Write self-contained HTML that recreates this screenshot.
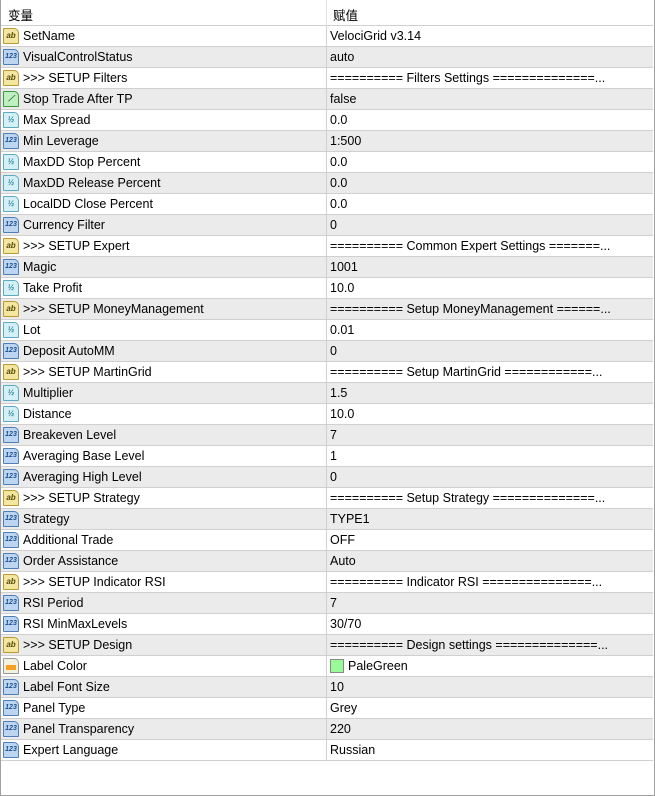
<!DOCTYPE html>
<html><head><meta charset="utf-8"><style>
*{margin:0;padding:0;box-sizing:border-box}
body{width:655px;height:796px;background:#fff;font-family:"Liberation Sans","Noto Sans CJK SC",sans-serif;font-size:12.5px;color:#000;position:relative;overflow:hidden}
.frame{position:absolute;left:0;top:0;width:655px;height:796px;border:1px solid #a0a0a0;border-top:none}
.hdr{position:absolute;left:1px;top:0;width:652px;height:26px;border-bottom:1px solid #d0d0d0}
.hdr span{position:absolute;top:5px;font-family:"Noto Sans CJK SC",sans-serif;font-size:12.5px}
.row{position:absolute;left:1px;width:652px;height:21px;border-bottom:1px solid #d0d0d0}
.row.g{background:#ebebeb}
.row .n{position:absolute;left:22px;top:3px;white-space:nowrap}
.row .v{position:absolute;left:329px;top:3px;white-space:nowrap;width:318px;overflow:hidden}
.row:before{content:"";position:absolute;left:325px;top:0;width:1px;height:21px;background:#d0d0d0}
.hdr:before{content:"";position:absolute;left:325px;top:0;width:1px;height:26px;background:#e0e0e0}
.ic{position:absolute;left:2px;top:2px;width:16px;height:16px;border:1px solid;border-radius:1px 5px 1px 1px;font-size:8px;line-height:14px;text-align:center;font-weight:bold}
.s{background:#f3e6a0;border-color:#b89a30;color:#5a4a00}
.i{background:#bcd6f2;border-color:#4f7fb8;color:#1d4f8f;font-size:7px}
.d{background:#d4f0f6;border-color:#5aaac0;color:#2a7f98}
.b{background:#bfeec0;border-color:#3a9a3a;color:#1a6a1a}
.c{background:#f5f0e0;border-color:#999;}
.c:after{content:"";position:absolute;left:2px;top:6px;width:10px;height:5px;background:#f5a020}
.sw{display:inline-block;width:14px;height:14px;background:#98fb98;border:1px solid #888;vertical-align:-3px;margin-right:4px}
</style></head><body>
<div class="frame"></div>
<div class="hdr"><span style="left:7px">变量</span><span style="left:332px">赋值</span></div>
<div class="row" style="top:26px"><i class="ic s">ab</i><span class="n">SetName</span><span class="v">VelociGrid v3.14</span></div>
<div class="row g" style="top:47px"><i class="ic i">123</i><span class="n">VisualControlStatus</span><span class="v">auto</span></div>
<div class="row" style="top:68px"><i class="ic s">ab</i><span class="n">&gt;&gt;&gt; SETUP Filters</span><span class="v">========== Filters Settings ==============...</span></div>
<div class="row g" style="top:89px"><i class="ic b">⟋</i><span class="n">Stop Trade After TP</span><span class="v">false</span></div>
<div class="row" style="top:110px"><i class="ic d">½</i><span class="n">Max Spread</span><span class="v">0.0</span></div>
<div class="row g" style="top:131px"><i class="ic i">123</i><span class="n">Min Leverage</span><span class="v">1:500</span></div>
<div class="row" style="top:152px"><i class="ic d">½</i><span class="n">MaxDD Stop Percent</span><span class="v">0.0</span></div>
<div class="row g" style="top:173px"><i class="ic d">½</i><span class="n">MaxDD Release Percent</span><span class="v">0.0</span></div>
<div class="row" style="top:194px"><i class="ic d">½</i><span class="n">LocalDD Close Percent</span><span class="v">0.0</span></div>
<div class="row g" style="top:215px"><i class="ic i">123</i><span class="n">Currency Filter</span><span class="v">0</span></div>
<div class="row" style="top:236px"><i class="ic s">ab</i><span class="n">&gt;&gt;&gt; SETUP Expert</span><span class="v">========== Common Expert Settings =======...</span></div>
<div class="row g" style="top:257px"><i class="ic i">123</i><span class="n">Magic</span><span class="v">1001</span></div>
<div class="row" style="top:278px"><i class="ic d">½</i><span class="n">Take Profit</span><span class="v">10.0</span></div>
<div class="row g" style="top:299px"><i class="ic s">ab</i><span class="n">&gt;&gt;&gt; SETUP MoneyManagement</span><span class="v">========== Setup MoneyManagement ======...</span></div>
<div class="row" style="top:320px"><i class="ic d">½</i><span class="n">Lot</span><span class="v">0.01</span></div>
<div class="row g" style="top:341px"><i class="ic i">123</i><span class="n">Deposit AutoMM</span><span class="v">0</span></div>
<div class="row" style="top:362px"><i class="ic s">ab</i><span class="n">&gt;&gt;&gt; SETUP MartinGrid</span><span class="v">========== Setup MartinGrid ============...</span></div>
<div class="row g" style="top:383px"><i class="ic d">½</i><span class="n">Multiplier</span><span class="v">1.5</span></div>
<div class="row" style="top:404px"><i class="ic d">½</i><span class="n">Distance</span><span class="v">10.0</span></div>
<div class="row g" style="top:425px"><i class="ic i">123</i><span class="n">Breakeven Level</span><span class="v">7</span></div>
<div class="row" style="top:446px"><i class="ic i">123</i><span class="n">Averaging Base Level</span><span class="v">1</span></div>
<div class="row g" style="top:467px"><i class="ic i">123</i><span class="n">Averaging High Level</span><span class="v">0</span></div>
<div class="row" style="top:488px"><i class="ic s">ab</i><span class="n">&gt;&gt;&gt; SETUP Strategy</span><span class="v">========== Setup Strategy ==============...</span></div>
<div class="row g" style="top:509px"><i class="ic i">123</i><span class="n">Strategy</span><span class="v">TYPE1</span></div>
<div class="row" style="top:530px"><i class="ic i">123</i><span class="n">Additional Trade</span><span class="v">OFF</span></div>
<div class="row g" style="top:551px"><i class="ic i">123</i><span class="n">Order Assistance</span><span class="v">Auto</span></div>
<div class="row" style="top:572px"><i class="ic s">ab</i><span class="n">&gt;&gt;&gt; SETUP Indicator RSI</span><span class="v">========== Indicator RSI ===============...</span></div>
<div class="row g" style="top:593px"><i class="ic i">123</i><span class="n">RSI Period</span><span class="v">7</span></div>
<div class="row" style="top:614px"><i class="ic i">123</i><span class="n">RSI MinMaxLevels</span><span class="v">30/70</span></div>
<div class="row g" style="top:635px"><i class="ic s">ab</i><span class="n">&gt;&gt;&gt; SETUP Design</span><span class="v">========== Design settings ==============...</span></div>
<div class="row" style="top:656px"><i class="ic c"></i><span class="n">Label Color</span><span class="v"><span class="sw"></span>PaleGreen</span></div>
<div class="row g" style="top:677px"><i class="ic i">123</i><span class="n">Label Font Size</span><span class="v">10</span></div>
<div class="row" style="top:698px"><i class="ic i">123</i><span class="n">Panel Type</span><span class="v">Grey</span></div>
<div class="row g" style="top:719px"><i class="ic i">123</i><span class="n">Panel Transparency</span><span class="v">220</span></div>
<div class="row" style="top:740px"><i class="ic i">123</i><span class="n">Expert Language</span><span class="v">Russian</span></div>
</body></html>
